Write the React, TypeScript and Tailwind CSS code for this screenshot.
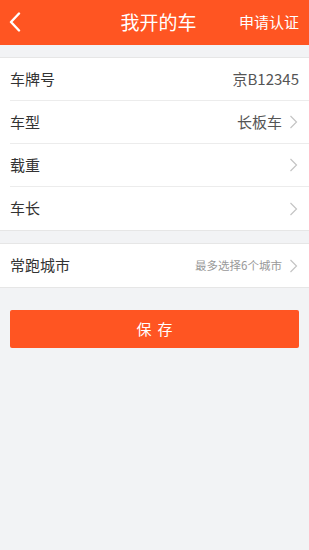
import React from "react";

const Chevron = () => (
  <svg width="9" height="14" viewBox="0 0 9 14" className="ml-[7px] shrink-0">
    <path d="M1.5 1 L7.5 7 L1.5 13" fill="none" stroke="#c4c4c4" strokeWidth="1.2" />
  </svg>
);

const Row = ({ label, value, hint, arrow, last }: { label: string; value?: string; hint?: string; arrow?: boolean; last?: boolean }) => (
  <div className={"ml-[10px] h-[43px] pr-[11px] flex items-center justify-between " + (last ? "" : "border-b border-[#ececec]")}>
    <span className="text-[15px] text-[#333]">{label}</span>
    <div className="flex items-center">
      {value && <span className={"text-[15px] text-[#555] " + (arrow ? "" : "-mr-[1px]")}>{value}</span>}
      {hint && <span className="text-[11.5px] text-[#999]">{hint}</span>}
      {arrow && <Chevron />}
    </div>
  </div>
);

export default function App() {
  return (
    <div className="w-[309px] h-[550px] bg-[#f2f3f5] flex flex-col" style={{ fontFamily: '"Noto Sans CJK SC", "Noto Sans", sans-serif' }}>
      <div className="h-[45px] bg-[#ff5522] flex items-center relative shrink-0">
        <svg width="14" height="20" viewBox="0 0 14 20" className="absolute left-[8px] top-[12px]">
          <path d="M11 1.5 L3 10 L11 18.5" fill="none" stroke="#fff" strokeWidth="2.4" strokeLinecap="round" strokeLinejoin="round" />
        </svg>
        <div className="flex-1 text-center text-white text-[19px] pl-[8px]">我开的车</div>
        <div className="absolute right-[10px] text-white text-[15px]">申请认证</div>
      </div>
      <div className="mt-[12px] bg-white border-y border-[#e6e6e6]">
        <Row label="车牌号" value="京B12345" />
        <Row label="车型" value="长板车" arrow />
        <Row label="载重" arrow />
        <Row label="车长" arrow last />
      </div>
      <div className="mt-[12px] bg-white border-y border-[#e6e6e6]">
        <Row label="常跑城市" hint="最多选择6个城市" arrow last />
      </div>
      <div className="mx-[10px] mt-[22px] h-[38px] bg-[#ff5522] rounded-[2px] flex items-center justify-center text-white text-[15px] tracking-[6px] pl-[6px]">
        保存
      </div>
    </div>
  );
}
